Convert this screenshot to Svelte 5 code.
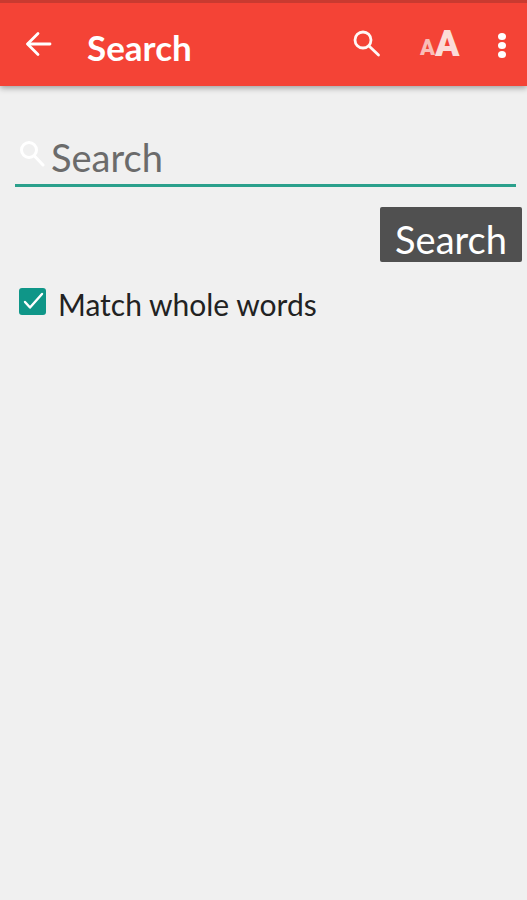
<script>
  let query = $state('');
  let whole = $state(true);
</script>

<div class="page">
  <header class="bar">
    <button class="back" aria-label="Back">
      <svg width="30" height="30" viewBox="0 0 30 30" fill="none" stroke="#fff" stroke-width="2.8" stroke-linecap="round" stroke-linejoin="round"><path d="M4 15H26"/><path d="M14 4.5 3.5 15 14 25.5"/></svg>
    </button>
    <h1>Search</h1>
    <div class="actions">
      <button class="ic search" aria-label="Search">
        <svg width="30" height="30" viewBox="0 0 30 30" fill="none" stroke="#fff8f6" stroke-width="2.8" stroke-linecap="round"><circle cx="11" cy="11" r="8"/><path d="M17 17 26.5 26"/></svg>
      </button>
      <span class="aa"><span class="small">A</span><span class="big">A</span></span>
      <span class="dots"><i></i><i></i><i></i></span>
    </div>
  </header>

  <main>
    <div class="field">
      <svg class="mag" width="26" height="28" viewBox="0 0 26 28" fill="none" stroke="#fff" stroke-width="3" stroke-linecap="round"><circle cx="10" cy="10" r="7.5"/><path d="M15.5 16 24 25"/></svg>
      <input bind:value={query} placeholder="Search" />
    </div>
    <div class="row-end"><button class="go">Search</button></div>
    <label class="check">
      <input type="checkbox" bind:checked={whole} />
      <span class="box"><svg width="27" height="27" viewBox="0 0 27 27" fill="none" stroke="#fff" stroke-width="2.4" stroke-linecap="round" stroke-linejoin="round"><path d="M6 14 11 19.5 23 6"/></svg></span>
      <span class="lab">Match whole words</span>
    </label>
  </main>
</div>

<style>
  :global(body) { margin: 0; background: #f0f0f0; }
  .page { min-height: 900px; background: #f0f0f0; font-family: "Lato", "Noto Sans", sans-serif; }
  button { border: 0; background: none; padding: 0; font: inherit; display: block; }
  .bar {
    height: 83px; border-top: 3px solid #c93a30; background: #f44336;
    box-shadow: 0 2px 6px rgba(0,0,0,.35);
    display: flex; align-items: center; color: #fff;
    padding: 0 21px 0 24px;
  }
  .back { margin-right: 33px; margin-top: 2px; }
  h1 { margin: 0; font-size: 35px; font-weight: 700; line-height: 1; flex: 1; padding-top: 6px; }
  .actions { display: flex; align-items: center; margin-top: 2px; }
  .ic { margin-right: 38px; }
  .aa { display: flex; align-items: flex-end; width: 38px; margin-right: 40px; font-family: "Roboto", sans-serif; font-weight: 900; color: #fbdcd8; line-height: 1; height: 30px; }
  .small { font-size: 22px; opacity: .8; line-height: 26px; }
  .big { font-size: 36px; line-height: 33px; }
  .dots { display: flex; flex-direction: column; gap: 2px; }
  .dots i { width: 8px; height: 7px; border-radius: 50%; background: #fff; }
  main { padding: 51px 11px 0 15px; }
  .field { position: relative; border-bottom: 3px solid #2ba08c; height: 47px; box-sizing: content-box; }
  .mag { position: absolute; left: 4px; top: 3px; }
  .field input {
    border: 0; outline: 0; background: none; width: 100%; box-sizing: border-box;
    padding: 0 0 0 36px; height: 40px; font: 400 38px "Lato", "Noto Sans", sans-serif; color: #333;
  }
  .field input::placeholder { color: #6b6b6b; opacity: 1; }
  .row-end { display: flex; justify-content: flex-end; margin-top: 20px; margin-right: -6px; }
  .go {
    width: 142px; height: 55px; background: #505050; color: #fff; border-radius: 2px;
    font-size: 38px; text-align: center; line-height: 64px; overflow: hidden;
  }
  .check { display: flex; align-items: flex-start; margin-top: 26px; padding-left: 4px; color: #222; }
  .check input { position: absolute; opacity: 0; }
  .box { width: 27px; height: 27px; border-radius: 3px; background: #0f9688; display: block; margin-right: 12px; }
  .box svg { display: block; }
  .lab { font-size: 30px; line-height: 38px; margin-top: -3px; }
</style>
